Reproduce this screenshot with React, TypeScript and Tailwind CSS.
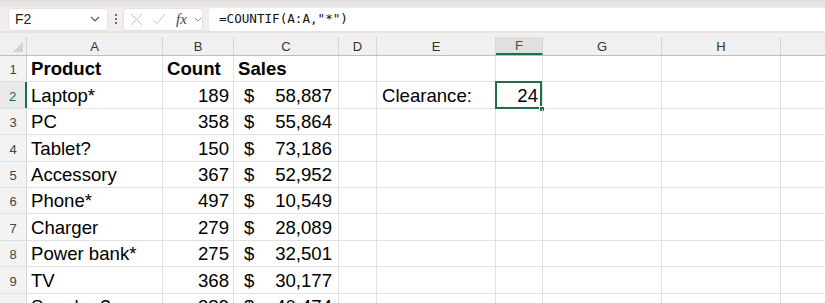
import { FC } from 'react';

type Row = {
  a: string;
  b?: string;
  c?: string;
  e?: string;
  f?: string;
  bold?: boolean;
};

const ROWS: Row[] = [
  { a: 'Product', b: 'Count', c: 'Sales', bold: true },
  { a: 'Laptop*', b: '189', c: '58,887', e: 'Clearance:', f: '24' },
  { a: 'PC', b: '358', c: '55,864' },
  { a: 'Tablet?', b: '150', c: '73,186' },
  { a: 'Accessory', b: '367', c: '52,952' },
  { a: 'Phone*', b: '497', c: '10,549' },
  { a: 'Charger', b: '279', c: '28,089' },
  { a: 'Power bank*', b: '275', c: '32,501' },
  { a: 'TV', b: '368', c: '30,177' },
  { a: 'Speaker?', b: '389', c: '40,474' },
];

// last column runs off the right edge, so its letter is never seen
const COLS = [
  { key: 'A', w: 'w-[136px]' },
  { key: 'B', w: 'w-[71px]' },
  { key: 'C', w: 'w-[105px]' },
  { key: 'D', w: 'w-[38px]' },
  { key: 'E', w: 'w-[119px]' },
  { key: 'F', w: 'w-[47px]' },
  { key: 'G', w: 'w-[119px]' },
  { key: 'H', w: 'w-[119px]' },
  { key: '', w: 'w-[130px]' },
];

const cell =
  'shrink-0 h-full border-r border-[#e1e1e1] flex items-end pb-[3px] leading-[18px] text-[18.6px] text-black';

const Chevron: FC<{ className?: string }> = ({ className }) => (
  <svg className={className} viewBox="0 0 10 6" fill="none" stroke="currentColor" strokeWidth="1.1">
    <path d="M1 1l4 4 4-4" />
  </svg>
);

const FormulaBar: FC = () => (
  <div className="bg-[#f3eeee]">
    <div className="h-[7px] bg-gradient-to-b from-[#e4dfdf] to-[#ece7e7]" />
    <div className="flex items-center h-[24px] pl-2">
      <div className="w-[100px] h-[23px] bg-white rounded-[4px] border border-[#e6e2e2] flex items-center justify-between pl-[6px] pr-[7px]">
        <span className="text-[14px] text-[#222]">F2</span>
        <Chevron className="w-[10px] h-[6px] text-[#555]" />
      </div>
      <div className="w-[15px] flex flex-col items-center gap-[2px]">
        <span className="w-[2px] h-[2px] bg-[#444] rounded-full" />
        <span className="w-[2px] h-[2px] bg-[#444] rounded-full" />
        <span className="w-[2px] h-[2px] bg-[#444] rounded-full" />
      </div>
      <div className="w-[80px] h-[23px] bg-white rounded-[4px] border border-[#e6e2e2] flex items-center pl-[6px]">
        <svg className="w-[13px] h-[13px] text-[#c4c4c4]" viewBox="0 0 13 13" stroke="currentColor" strokeWidth="1">
          <path d="M1 1l11 11M12 1L1 12" />
        </svg>
        <svg className="ml-[9px] w-[14px] h-[12px] text-[#c4c4c4]" viewBox="0 0 14 12" fill="none" stroke="currentColor" strokeWidth="1">
          <path d="M1 6.5l4 4L13 1" />
        </svg>
        <span className="ml-[10px] text-[15px] italic text-[#444] leading-none" style={{ fontFamily: '"Liberation Serif", serif' }}>
          fx
        </span>
        <Chevron className="ml-[7px] w-[8px] h-[5px] text-[#777]" />
      </div>
      <div className="ml-[6px] flex-1 h-[23px] bg-white rounded-l-[4px] flex items-center pl-[10px]">
        <span className="text-[12.6px] text-[#111]" style={{ fontFamily: '"DejaVu Sans Mono", monospace' }}>
          =COUNTIF(A:A,"*")
        </span>
      </div>
    </div>
    <div className="h-[2px] bg-[#e7e2e2]" />
    <div className="h-[4px] bg-[#f3efef]" />
  </div>
);

const App: FC = () => (
  <div
    className="w-[825px] h-[303px] overflow-hidden bg-white"
    style={{ fontFamily: '"Liberation Sans", Arial, sans-serif' }}
  >
    <FormulaBar />

    <div className="flex h-[19px] bg-[#f0f0f0] border-b border-[#bdbdbd]">
      <div className="shrink-0 w-[27px] h-full border-r border-[#d4d4d4] relative">
        <svg className="absolute right-[3px] bottom-[3px] w-[10px] h-[10px]" viewBox="0 0 10 10">
          <path d="M10 0L10 10L0 10Z" fill="#d2d2d2" />
        </svg>
      </div>
      {COLS.map((col, i) => (
        <div
          key={i}
          className={`${col.w} shrink-0 h-full flex items-center justify-center pt-[1px] text-[13px] border-r border-[#d6d6d6] ${
            col.key === 'F'
              ? 'bg-[#e0e0e0] text-[#1d6b40] border-b-2 border-b-[#1e7145]'
              : 'text-[#333]'
          }`}
        >
          {col.key}
        </div>
      ))}
    </div>

    {ROWS.map((row, i) => {
      const n = i + 1;
      const sel = n === 2;
      return (
        <div key={n} className="flex h-[26.4px] border-b border-[#e1e1e1]">
          <div
            className={`shrink-0 w-[27px] h-full flex items-center justify-center pt-[3px] text-[13px] border-r ${
              sel
                ? 'bg-[#e9e9e9] text-[#1d6b40] border-r-2 border-r-[#1e7145]'
                : 'bg-[#f3f3f3] text-[#444] border-[#d4d4d4]'
            }`}
          >
            {n}
          </div>
          <div className={`${cell} w-[136px] pl-[4px] ${row.bold ? 'font-bold' : ''}`}>{row.a}</div>
          <div
            className={`${cell} w-[71px] ${
              row.bold ? 'font-bold pl-[4px]' : 'justify-end pr-[4px]'
            }`}
          >
            {row.b}
          </div>
          <div className={`${cell} w-[105px] ${row.bold ? 'font-bold pl-[4px]' : 'justify-between pl-[10px] pr-[6px]'}`}>
            {row.bold ? row.c : (
              <>
                <span>$</span>
                <span>{row.c}</span>
              </>
            )}
          </div>
          <div className={`${cell} w-[38px]`} />
          <div className={`${cell} w-[119px] pl-[5px]`}>{row.e}</div>
          <div className={`${cell} w-[47px] justify-end pr-[4px] relative`}>
            {row.f}
            {sel && (
              <>
                <div className="absolute -left-[1px] -top-[1px] right-0 -bottom-[1px] border-2 border-[#1e7145]" />
                <div className="absolute -right-[3px] -bottom-[4px] w-[6px] h-[6px] bg-[#1e7145] border border-white" />
              </>
            )}
          </div>
          <div className={`${cell} w-[119px]`} />
          <div className={`${cell} w-[119px]`} />
          <div className={`${cell} w-[130px]`} />
        </div>
      );
    })}
  </div>
);

export default App;
